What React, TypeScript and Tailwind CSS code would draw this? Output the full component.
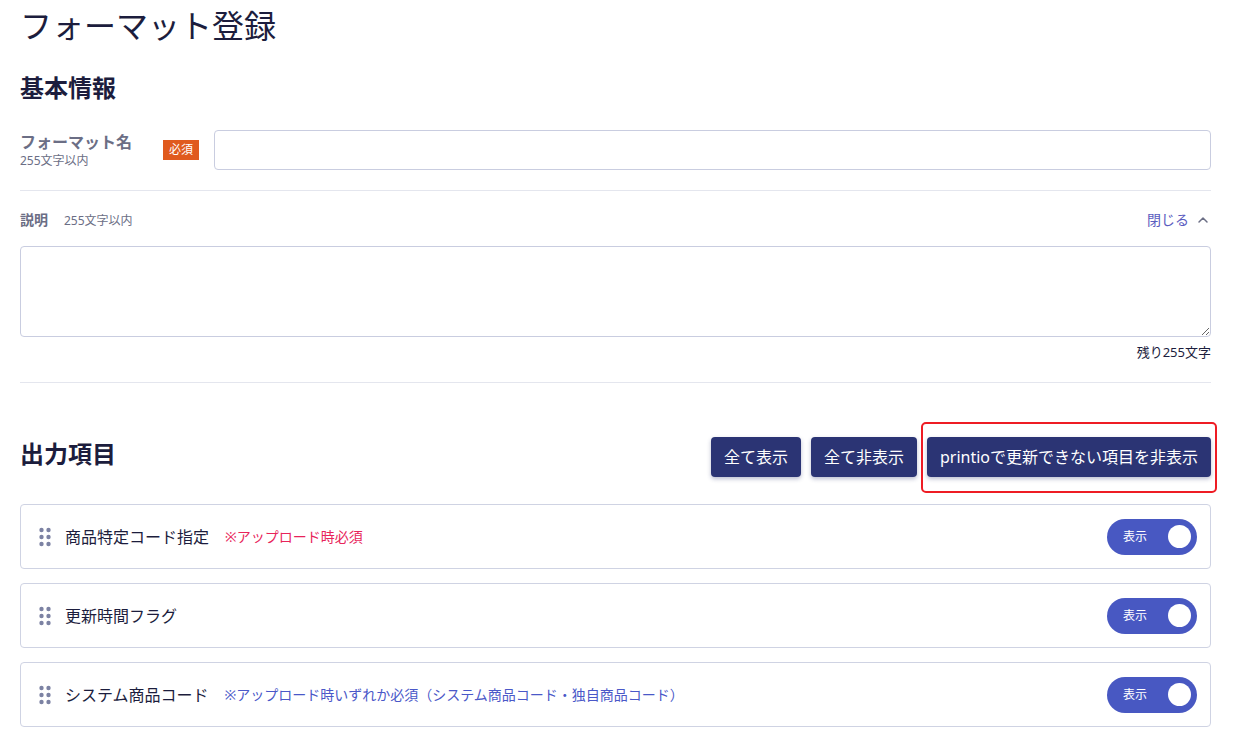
import { ChevronUp } from "lucide-react";

type Item = {
  label: string;
  note?: string;
  noteTone?: "red" | "blue";
};

const items: Item[] = [
  { label: "商品特定コード指定", note: "※アップロード時必須", noteTone: "red" },
  { label: "更新時間フラグ" },
  {
    label: "システム商品コード",
    note: "※アップロード時いずれか必須（システム商品コード・独自商品コード）",
    noteTone: "blue",
  },
];

function DragHandle() {
  return (
    <svg width="12" height="20" viewBox="0 0 12 20" className="shrink-0">
      {[3, 10, 17].map((cy) => (
        <g key={cy} fill="#7c82a3">
          <circle cx="2.5" cy={cy} r="2.2" />
          <circle cx="9.5" cy={cy} r="2.2" />
        </g>
      ))}
    </svg>
  );
}

function Toggle() {
  return (
    <button className="flex h-9 w-[90px] items-center justify-between rounded-full bg-[#4858c2] pr-[6px] pl-4">
      <span className="text-[12px] text-white">表示</span>
      <span className="h-[23px] w-[23px] rounded-full bg-white" />
    </button>
  );
}

export default function App() {
  return (
    <div className="min-h-screen bg-white pr-[23px] pl-5 font-['Noto_Sans','Noto_Sans_CJK_JP',sans-serif] text-[#1c1d3d]">
      {/* タイトル */}
      <h1 className="pt-[4px] text-[32px] leading-[44px] font-normal">フォーマット登録</h1>

      {/* 基本情報 */}
      <h2 className="mt-[24px] text-[24px] leading-8 font-bold">基本情報</h2>

      <div className="mt-[26px] flex items-center border-b border-[#e4e6ee] pb-[20px]">
        <div className="w-[143px]">
          <div className="text-[16px] leading-5 font-bold text-[#6b6e85]">フォーマット名</div>
          <div className="mt-[1px] text-[12px] leading-4 text-[#6b6e85]">255文字以内</div>
        </div>
        <span className="bg-[#e05a1e] px-[6px] text-[12px] leading-[20px] text-white">必須</span>
        <input className="ml-[15px] h-10 flex-1 rounded-[4px] border border-[#c9cde0] px-3 outline-none" />
      </div>

      <div className="border-b border-[#e4e6ee] pb-[20px]">
        <div className="mt-[18px] flex items-center justify-between">
          <div className="flex items-baseline gap-[16px]">
            <span className="text-[14px] font-bold text-[#6b6e85]">説明</span>
            <span className="text-[12px] text-[#6b6e85]">255文字以内</span>
          </div>
          <button className="flex items-center gap-[6px] text-[14px] text-[#5a5cc0]">
            閉じる
            <ChevronUp className="h-4 w-4 text-[#6b6e85]" strokeWidth={2.2} />
          </button>
        </div>
        <textarea className="mt-[16px] block h-[91px] w-full resize-y rounded-[4px] border border-[#c9cde0] px-3 py-2 outline-none" />
        <div className="mt-[5px] text-right text-[13px] leading-5 text-[#1c1d3d]">残り255文字</div>
      </div>

      {/* 出力項目 */}
      <div className="mt-[54px] flex items-center justify-between">
        <h2 className="pb-[6px] text-[24px] leading-8 font-bold">出力項目</h2>
        <div className="flex gap-[10px]">
          <button className="h-10 rounded-[4px] bg-[#2b3474] px-[13px] text-[16px] text-white shadow-[0_2px_4px_rgba(30,40,100,0.3)]">
            全て表示
          </button>
          <button className="h-10 rounded-[4px] bg-[#2b3474] px-[13px] text-[16px] text-white shadow-[0_2px_4px_rgba(30,40,100,0.3)]">
            全て非表示
          </button>
          <div className="relative">
            <button className="h-10 rounded-[4px] bg-[#2b3474] px-[13px] text-[16px] text-white shadow-[0_2px_4px_rgba(30,40,100,0.3)]">
              printioで更新できない項目を非表示
            </button>
            <div className="pointer-events-none absolute -top-[15px] -right-[6px] -bottom-[16px] -left-[6px] rounded-[5px] border-2 border-[#ee1c24]" />
          </div>
        </div>
      </div>

      <div className="mt-[27px] flex flex-col gap-[14px] pb-4">
        {items.map((item) => (
          <div
            key={item.label}
            className="flex h-[65px] items-center rounded-[4px] border border-[#cfd3e3] pr-[13px] pl-[18px]"
          >
            <DragHandle />
            <span className="ml-[14px] text-[16px]">{item.label}</span>
            {item.note && (
              <span
                className={`ml-[16px] text-[14px] ${
                  item.noteTone === "red" ? "text-[#e8245a]" : "text-[#4a58c8]"
                }`}
              >
                {item.note}
              </span>
            )}
            <div className="ml-auto">
              <Toggle />
            </div>
          </div>
        ))}
      </div>
    </div>
  );
}
